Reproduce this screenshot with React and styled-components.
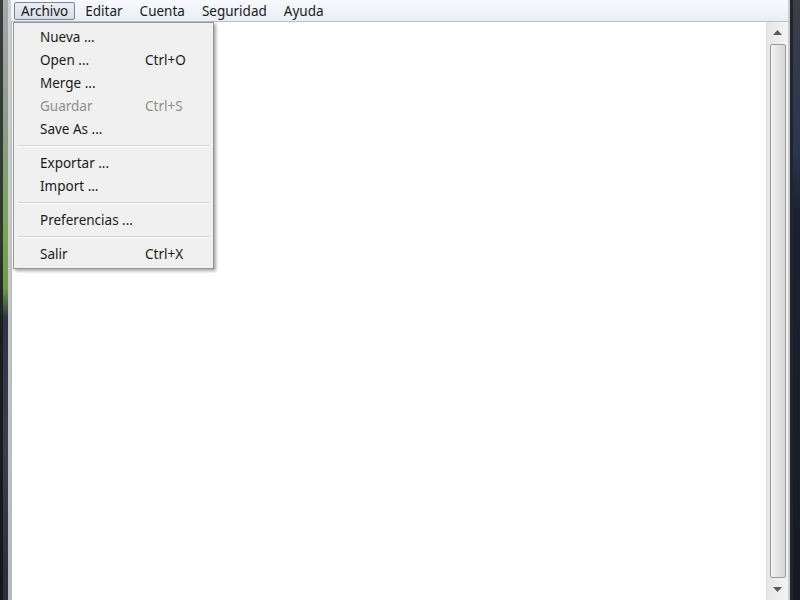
import React from 'react';
import styled, { createGlobalStyle } from 'styled-components';

const GlobalStyle = createGlobalStyle`
    html, body {
        margin: 0;
        padding: 0;
        background: #1c2029;
    }
    body {
        font-family: "Noto Sans", "Open Sans", "DejaVu Sans", sans-serif;
    }
`;

const Screen = styled.div`
    width: 800px;
    height: 600px;
    display: flex;
    position: relative;
    overflow: hidden;
`;

const LeftFrame = styled.div`
    width: 11px;
    flex-shrink: 0;
    display: flex;
`;

const FrameEdge = styled.div`
    width: ${props => props.w}px;
    background: ${props => props.bg};
`;

const RightFrame = styled.div`
    width: 12px;
    flex-shrink: 0;
    display: flex;
`;

const Window = styled.div`
    flex: 1;
    display: flex;
    flex-direction: column;
    background: #f0f0f0;
`;

const MenuBar = styled.div`
    height: 22px;
    display: flex;
    align-items: center;
    padding-left: 3px;
    background: linear-gradient(#f7f9fd, #e9eef7);
    border-bottom: 1px solid #b9bec7;
    box-sizing: border-box;
`;

const MenuTitle = styled.div`
    height: 18px;
    display: flex;
    align-items: center;
    padding: 0 6px;
    margin-right: 3px;
    font-size: 13.5px;
    color: #1a1a1a;
    border: 1px solid ${props => (props.open ? '#7a8798' : 'transparent')};
    border-radius: 2px;
    background: ${props => (props.open ? 'linear-gradient(#e9edf3, #d8dee8)' : 'transparent')};
    box-sizing: border-box;
`;

const Body = styled.div`
    flex: 1;
    display: flex;
`;

const Content = styled.div`
    flex: 1;
    background: #ffffff;
    border-left: 1px solid #b9b9b9;
`;

const ScrollBar = styled.div`
    width: 21px;
    display: flex;
    flex-direction: column;
    align-items: center;
    background: linear-gradient(90deg, #e6e6e6, #f4f4f4);
    border-left: 1px solid #e2e2e2;
`;

const ArrowButton = styled.div`
    height: 21px;
    width: 100%;
    display: flex;
    align-items: center;
    justify-content: center;
`;

const Thumb = styled.div`
    flex: 1;
    width: 16px;
    margin: 1px 0;
    border: 1px solid #9c9c9c;
    border-radius: 2px;
    background: linear-gradient(90deg, #f3f3f3, #e4e4e4 50%, #d6d6d6);
    box-sizing: border-box;
`;

const Dropdown = styled.div`
    position: absolute;
    left: 13px;
    top: 22px;
    width: 201px;
    padding: 2px 2px 3px;
    background: #f0f0f0;
    border: 1px solid #979797;
    box-shadow: 2px 2px 3px rgba(0, 0, 0, 0.35);
    box-sizing: border-box;
`;

const Item = styled.div`
    height: 23px;
    display: flex;
    align-items: center;
    padding-left: 24px;
    font-size: 13.5px;
    color: ${props => (props.disabled ? '#8e8e8e' : '#1a1a1a')};
`;

const Label = styled.span`
    width: 105px;
`;

const Separator = styled.div`
    height: 11px;
    display: flex;
    align-items: center;
    &::after {
        content: '';
        flex: 1;
        margin: 0 2px;
        height: 1px;
        background: #d2d2d2;
        border-bottom: 1px solid #ffffff;
    }
`;

function Arrow({ down }) {
    return (
        <svg width="9" height="5" viewBox="0 0 9 5">
            <path d={down ? 'M0 0 H9 L4.5 5 Z' : 'M0 5 H9 L4.5 0 Z'} fill="#5a5a5a" />
        </svg>
    );
}

const menus = ['Archivo', 'Editar', 'Cuenta', 'Seguridad', 'Ayuda'];

const items = [
    { label: 'Nueva ...' },
    { label: 'Open ...', key: 'Ctrl+O' },
    { label: 'Merge ...' },
    { label: 'Guardar', key: 'Ctrl+S', disabled: true },
    { label: 'Save As ...' },
    { sep: true },
    { label: 'Exportar ...' },
    { label: 'Import ...' },
    { sep: true },
    { label: 'Preferencias ...' },
    { sep: true },
    { label: 'Salir', key: 'Ctrl+X' },
];

export default function App() {
    return (
        <>
            <GlobalStyle />
            <Screen>
                <LeftFrame>
                    <FrameEdge w={3} bg="linear-gradient(#3a3d3e, #2e3a2a 40%, #1a1d22 55%, #15171c)" />
                    <FrameEdge w={5} bg="linear-gradient(#a4a9ab, #8e9c8e 20%, #78a55a 38%, #6e9a4e 48%, #2e3444 53%, #3a3f4e 75%, #2a2e3a)" />
                    <FrameEdge w={3} bg="linear-gradient(#cfd2d4, #c4c8c4 50%, #b5b8bf)" />
                </LeftFrame>
                <Window>
                    <MenuBar>
                        {menus.map((m, i) => (
                            <MenuTitle key={m} open={i === 0}>{m}</MenuTitle>
                        ))}
                    </MenuBar>
                    <Body>
                        <Content />
                        <ScrollBar>
                            <ArrowButton><Arrow /></ArrowButton>
                            <Thumb />
                            <ArrowButton><Arrow down /></ArrowButton>
                        </ScrollBar>
                    </Body>
                </Window>
                <RightFrame>
                    <FrameEdge w={2} bg="#c9ccd0" />
                    <FrameEdge w={3} bg="#22252b" />
                    <FrameEdge w={7} bg="linear-gradient(#3b3f47, #2a3550 25%, #1c2231 35%, #171a20)" />
                </RightFrame>
                <Dropdown>
                    {items.map((it, i) =>
                        it.sep ? (
                            <Separator key={i} />
                        ) : (
                            <Item key={i} disabled={it.disabled}>
                                <Label>{it.label}</Label>
                                {it.key}
                            </Item>
                        )
                    )}
                </Dropdown>
            </Screen>
        </>
    );
}
